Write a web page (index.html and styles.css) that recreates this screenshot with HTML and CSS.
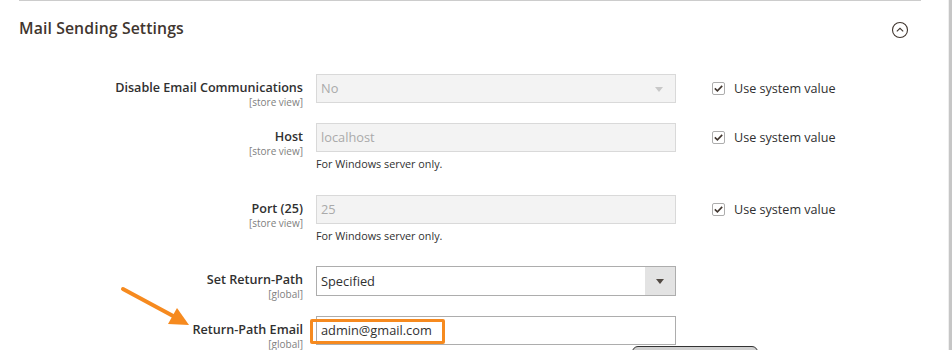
FILE: index.html
```html
<!DOCTYPE html>
<html lang="en">
<head>
  <meta charset="UTF-8" />
  <meta name="viewport" content="width=device-width, initial-scale=1.0"/>
  <title>Mail Sending Settings</title>
  <link rel="stylesheet" href="styles.css">
</head>
<body>
  <div class="page">
    <div class="main">
      <!-- section header -->
      <div class="section-head">
        <h2>Mail Sending Settings</h2>
        <svg class="collapse" width="18" height="18" viewBox="0 0 18 18">
          <circle cx="9" cy="9" r="7.5" fill="none" stroke="#41362f" stroke-width="1.1"/>
          <path d="M5.8 10.4 L9 7.3 L12.2 10.4" fill="none" stroke="#41362f" stroke-width="1.1"/>
        </svg>
      </div>

      <!-- fields -->
      <div class="fields">
        <div class="row">
          <div class="label">Disable Email Communications<span class="scope">[store view]</span></div>
          <div class="control">
            <div class="input disabled select">No<span class="arrow"></span></div>
          </div>
          <label class="use-system"><span class="check"><svg width="9" height="7" viewBox="0 0 9 7"><path d="M0.8 3.4 L3.4 5.8 L8.2 0.9" fill="none" stroke="#41362f" stroke-width="1.6"/></svg></span>Use system value</label>
        </div>

        <div class="row">
          <div class="label">Host<span class="scope">[store view]</span></div>
          <div class="control">
            <div class="input disabled">localhost</div>
            <div class="note">For Windows server only.</div>
          </div>
          <label class="use-system"><span class="check"><svg width="9" height="7" viewBox="0 0 9 7"><path d="M0.8 3.4 L3.4 5.8 L8.2 0.9" fill="none" stroke="#41362f" stroke-width="1.6"/></svg></span>Use system value</label>
        </div>

        <div class="row">
          <div class="label">Port (25)<span class="scope">[store view]</span></div>
          <div class="control">
            <div class="input disabled">25</div>
            <div class="note">For Windows server only.</div>
          </div>
          <label class="use-system"><span class="check"><svg width="9" height="7" viewBox="0 0 9 7"><path d="M0.8 3.4 L3.4 5.8 L8.2 0.9" fill="none" stroke="#41362f" stroke-width="1.6"/></svg></span>Use system value</label>
        </div>

        <div class="row row-select">
          <div class="label">Set Return-Path<span class="scope">[global]</span></div>
          <div class="control">
            <div class="input select tall">Specified<span class="arrow-box"><span class="arrow"></span></span></div>
          </div>
        </div>

        <div class="row">
          <div class="label">Return-Path Email<span class="scope">[global]</span></div>
          <div class="control">
            <div class="input">admin@gmail.com<span class="highlight"></span></div>
          </div>
        </div>
      </div>

      <!-- annotation arrow -->
      <svg class="pointer" width="80" height="50" viewBox="0 0 80 50">
        <line x1="4" y1="4" x2="56" y2="32" stroke="#f68a1f" stroke-width="4" stroke-linecap="round"/>
        <polygon points="70,40 49,39 58,23" fill="#f68a1f"/>
      </svg>

      <div class="tip"></div>
    </div>
    <div class="edge"></div>
  </div>
</body>
</html>
```

FILE: styles.css
```css
body {
  margin: 0;
  font-family: 'Open Sans', 'Liberation Sans', sans-serif;
  color: #303030;
  background: #fff;
  overflow: hidden;
}

.page {
  display: flex;
  height: 350px;
}

.main {
  flex: 1;
  position: relative;
  padding-left: 19px;
}

.edge {
  width: 3px;
  background: #c6c6c6;
  border-left: 1px solid #efefef;
}

.section-head {
  display: flex;
  align-items: center;
  justify-content: space-between;
  width: 902px;
  height: 56px;
  border-top: 1px solid #cccccc;
  box-sizing: border-box;
  padding-right: 12px;
}

h2 {
  margin: 0 0 1px;
  font-size: 15.8px;
  font-weight: 600;
  color: #41362f;
  letter-spacing: 0.1px;
}

.collapse {
  margin-top: 2px;
}

.fields {
  display: flex;
  flex-direction: column;
  gap: 20px;
  padding-top: 18px;
}

.row {
  display: grid;
  grid-template-columns: 284px 360px auto;
  column-gap: 13px;
  align-items: start;
}

.row-select {
  margin-top: -1px;
}

.label {
  display: flex;
  flex-direction: column;
  align-items: flex-end;
  text-align: right;
  font-size: 12.6px;
  font-weight: 600;
  color: #303030;
  padding-top: 7px;
  line-height: 14px;
  height: 29px;
  box-sizing: border-box;
}

.scope {
  margin-top: 2px;
  font-size: 10px;
  font-weight: 400;
  color: #808080;
  line-height: 11px;
}

.control {
  display: flex;
  flex-direction: column;
}

.input {
  position: relative;
  height: 29px;
  box-sizing: border-box;
  border: 1px solid #adadad;
  padding: 0 4px;
  font-size: 12.8px;
  line-height: 27px;
  color: #303030;
  background: #fff;
}

.input.tall {
  height: 30px;
  line-height: 28px;
}

.input.disabled {
  background: #f3f3f3;
  border-color: #d9d9d9;
  color: #aaaaaa;
}

.arrow {
  position: absolute;
  right: 12px;
  top: 12px;
  border-left: 4px solid transparent;
  border-right: 4px solid transparent;
  border-top: 5px solid #c8c8c8;
}

.arrow-box {
  position: absolute;
  right: 0;
  top: 0;
  bottom: 0;
  width: 30px;
  background: #e3e3e3;
}

.arrow-box .arrow {
  right: 11px;
  border-top-color: #514943;
}

.note {
  font-size: 10.8px;
  line-height: 16px;
  padding-top: 4px;
  margin-bottom: 3px;
  color: #303030;
}

.use-system {
  display: flex;
  align-items: center;
  gap: 9px;
  padding-left: 23px;
  height: 29px;
  font-size: 12.6px;
  color: #303030;
}

.check {
  display: flex;
  align-items: center;
  justify-content: center;
  width: 13px;
  height: 13px;
  box-sizing: border-box;
  border: 1px solid #adadad;
  border-radius: 2px;
  background: #fff;
}

.highlight {
  position: absolute;
  left: -7px;
  top: 2px;
  width: 135px;
  height: 25px;
  box-sizing: border-box;
  border: 3px solid #f68a1f;
  border-radius: 2px;
}

.pointer {
  position: absolute;
  left: 119px;
  top: 285px;
}

.tip {
  position: absolute;
  left: 632px;
  top: 346px;
  width: 126px;
  height: 12px;
  box-sizing: border-box;
  border: 1px solid #333;
  border-radius: 6px 6px 0 0;
  background: #d0d0d0;
}
```
